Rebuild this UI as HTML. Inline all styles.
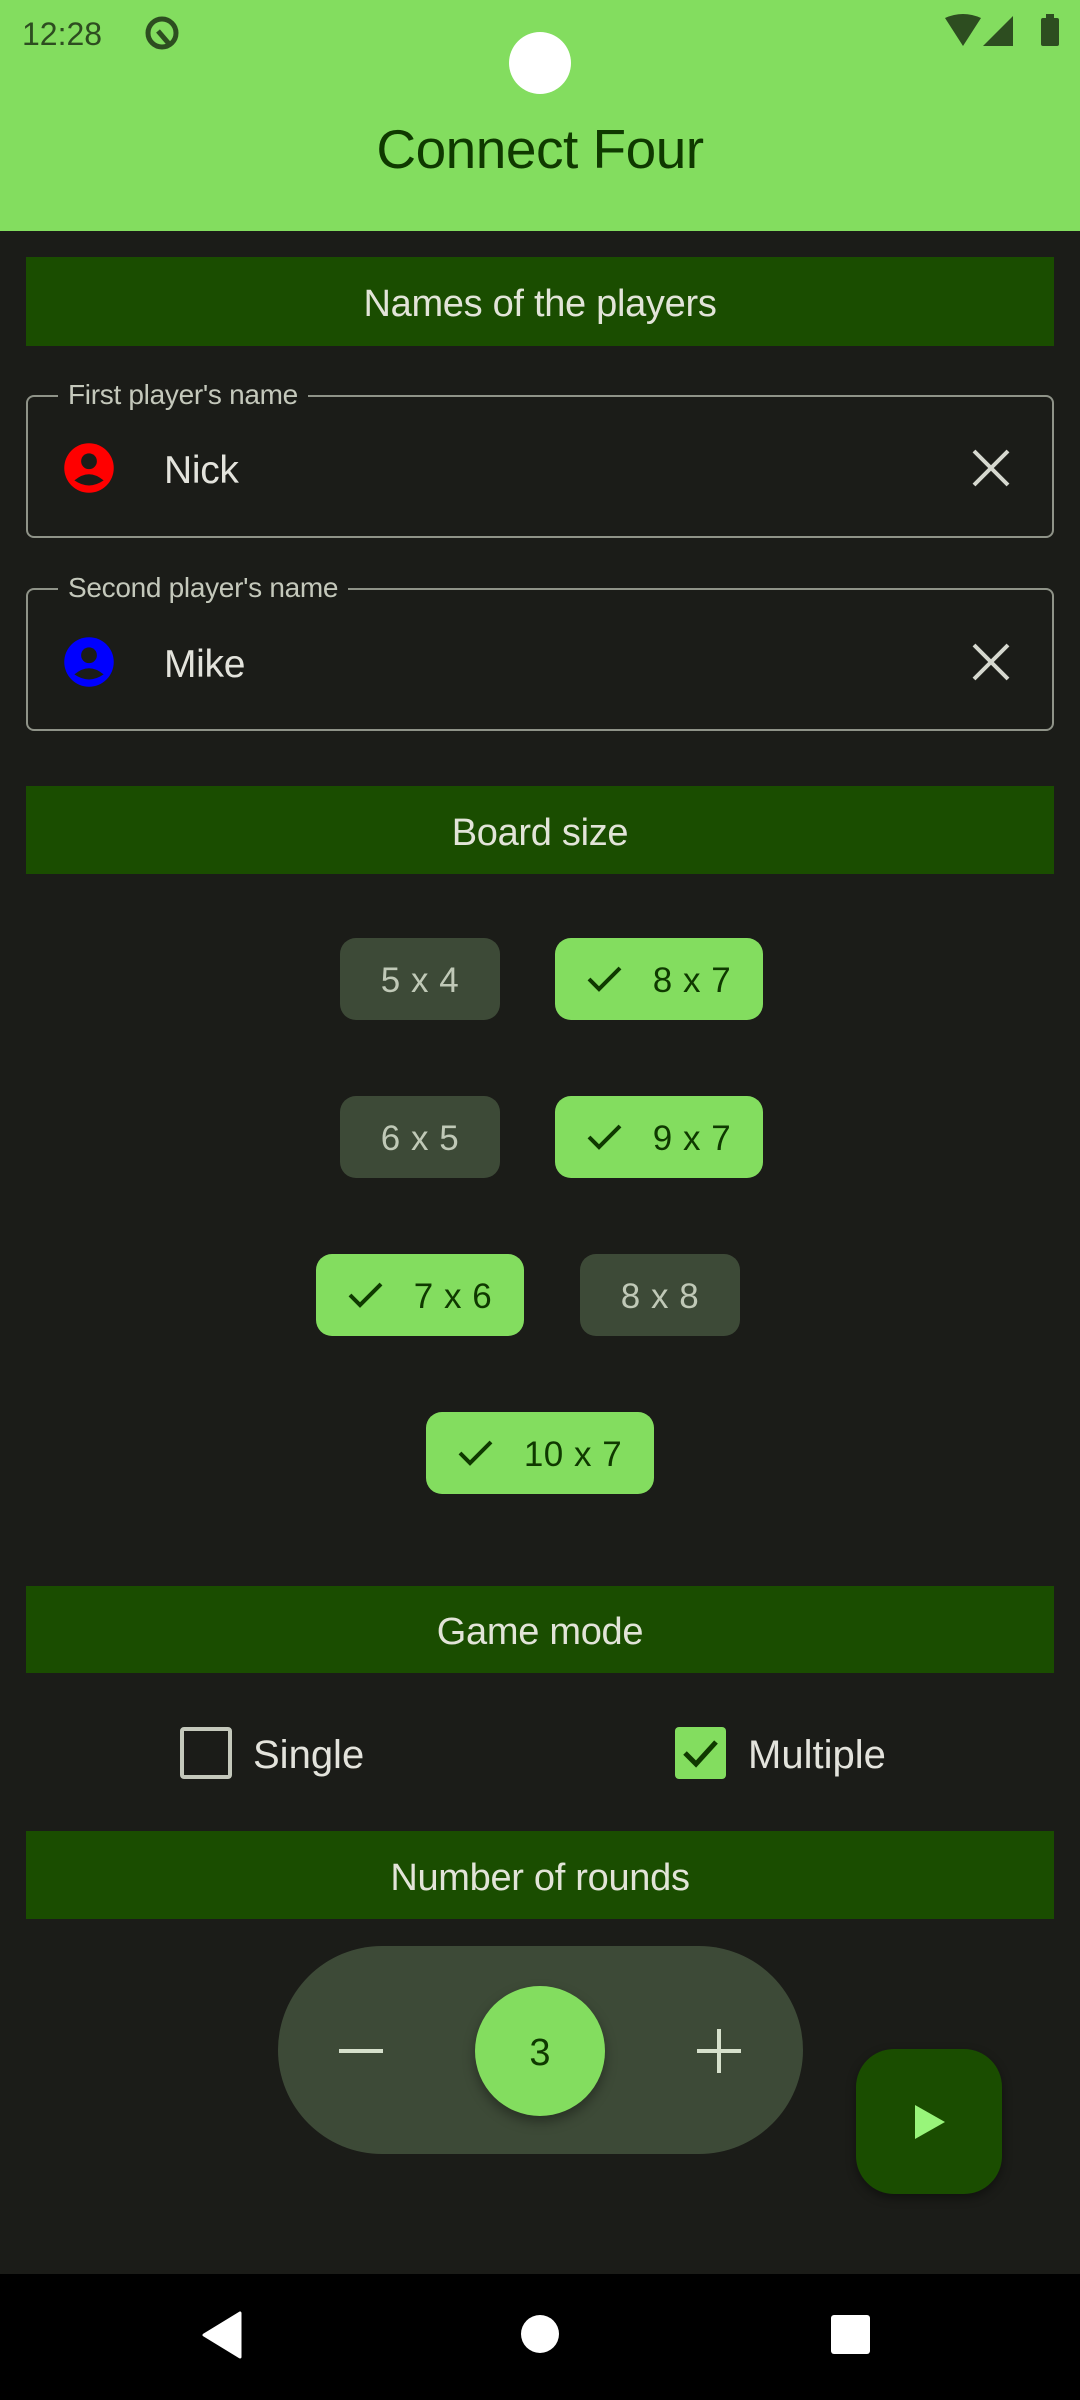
<!DOCTYPE html>
<html><head><meta charset="utf-8"><style>
*{margin:0;padding:0;box-sizing:border-box}
body{width:1080px;height:2400px;background:#1b1c18;font-family:"Liberation Sans",sans-serif;position:relative;overflow:hidden}
.a{position:absolute}
.top{left:0;top:0;width:1080px;height:231px;background:#83dd5f}
.hdr{left:26px;width:1028px;background:#1a4d00;color:#e2e4d8;font-size:38px;display:flex;align-items:center;justify-content:center;padding-top:6px;letter-spacing:-0.3px}
.fld{left:26px;width:1028px;height:143px;border:2px solid #8f9388;border-radius:8px}
.lbl{background:#1b1c18;color:#c4c8bb;font-size:28px;padding:0 10px;left:58px;letter-spacing:-0.3px}
.name{color:#e3e3dc;font-size:39px;left:164px;letter-spacing:-0.3px}
.chip{height:82px;border-radius:16px;font-size:35px;letter-spacing:0.5px;display:flex;align-items:center;justify-content:center;padding-top:4px}
.off{background:#3d4a37;color:#c0c9b7}
.on{background:#83dd5f;color:#0f3900}
.ck{width:36px;height:28px;margin-right:30px;margin-top:-4px}
</style></head><body>
<div class="a top"></div>
<div class="a" style="left:22px;top:16px;font-size:32px;color:#2d4d20">12:28</div>
<svg class="a" style="left:142px;top:13px" width="40" height="40" viewBox="0 0 40 40"><circle cx="20" cy="20" r="14" fill="none" stroke="#2d4d20" stroke-width="5"/><path d="M16 18 L28 32" stroke="#2d4d20" stroke-width="5"/></svg>
<svg class="a" style="left:945px;top:14px" width="120" height="34" viewBox="0 0 120 34"><path d="M0 4 Q18 -4 36 4 L18 32Z" fill="#2d4d20"/><path d="M68 2 L68 32 L38 32Z" fill="#2d4d20"/><rect x="96" y="4" width="18" height="28" rx="2" fill="#2d4d20"/><rect x="101" y="0" width="8" height="5" fill="#2d4d20"/></svg>
<div class="a" style="left:509px;top:32px;width:62px;height:62px;border-radius:50%;background:#fff"></div>
<div class="a" style="left:0;width:1080px;top:117px;text-align:center;font-size:55px;color:#0f3900;letter-spacing:-0.5px">Connect Four</div>

<div class="a hdr" style="top:257px;height:89px">Names of the players</div>
<div class="a fld" style="top:395px"></div>
<div class="a lbl" style="top:379px">First player's name</div>
<svg class="a" style="left:62px;top:441px" width="54" height="54" viewBox="0 0 24 24"><circle cx="12" cy="12" r="11" fill="#f00"/><circle cx="12" cy="9" r="3.5" fill="#1b1c18"/><path d="M5.5 17.5 Q12 12 18.5 17.5 Q12 22 5.5 17.5Z" fill="#1b1c18"/></svg>
<div class="a name" style="top:449px">Nick</div>
<svg class="a" style="left:972px;top:449px" width="38" height="38" viewBox="0 0 38 38"><path d="M2 2L36 36M36 2L2 36" stroke="#d6d8cf" stroke-width="4"/></svg>

<div class="a fld" style="top:588px"></div>
<div class="a lbl" style="top:572px">Second player's name</div>
<svg class="a" style="left:62px;top:635px" width="54" height="54" viewBox="0 0 24 24"><circle cx="12" cy="12" r="11" fill="#00f"/><circle cx="12" cy="9" r="3.5" fill="#1b1c18"/><path d="M5.5 17.5 Q12 12 18.5 17.5 Q12 22 5.5 17.5Z" fill="#1b1c18"/></svg>
<div class="a name" style="top:643px">Mike</div>
<svg class="a" style="left:972px;top:643px" width="38" height="38" viewBox="0 0 38 38"><path d="M2 2L36 36M36 2L2 36" stroke="#d6d8cf" stroke-width="4"/></svg>

<div class="a hdr" style="top:786px;height:88px">Board size</div>
<div class="a chip off" style="left:340px;top:938px;width:160px">5 x 4</div>
<div class="a chip on" style="left:555px;top:938px;width:208px"><svg class="ck" viewBox="0 0 36 28"><path d="M2 14L12 24L33 3" fill="none" stroke="#0f3900" stroke-width="4"/></svg>8 x 7</div>
<div class="a chip off" style="left:340px;top:1096px;width:160px">6 x 5</div>
<div class="a chip on" style="left:555px;top:1096px;width:208px"><svg class="ck" viewBox="0 0 36 28"><path d="M2 14L12 24L33 3" fill="none" stroke="#0f3900" stroke-width="4"/></svg>9 x 7</div>
<div class="a chip on" style="left:316px;top:1254px;width:208px"><svg class="ck" viewBox="0 0 36 28"><path d="M2 14L12 24L33 3" fill="none" stroke="#0f3900" stroke-width="4"/></svg>7 x 6</div>
<div class="a chip off" style="left:580px;top:1254px;width:160px">8 x 8</div>
<div class="a chip on" style="left:426px;top:1412px;width:228px"><svg class="ck" viewBox="0 0 36 28"><path d="M2 14L12 24L33 3" fill="none" stroke="#0f3900" stroke-width="4"/></svg>10 x 7</div>

<div class="a hdr" style="top:1586px;height:87px">Game mode</div>
<div class="a" style="left:180px;top:1727px;width:52px;height:52px;border:4px solid #c4c8bb;border-radius:4px"></div>
<div class="a" style="left:253px;top:1733px;font-size:40px;color:#e3e3dc">Single</div>
<div class="a" style="left:675px;top:1727px;width:51px;height:52px;background:#83dd5f;border-radius:4px"></div>
<svg class="a" style="left:675px;top:1727px" width="51" height="52" viewBox="0 0 51 52"><path d="M10 26L21 37L41 15" fill="none" stroke="#0f3900" stroke-width="5"/></svg>
<div class="a" style="left:748px;top:1733px;font-size:40px;color:#e3e3dc">Multiple</div>

<div class="a hdr" style="top:1831px;height:88px">Number of rounds</div>
<div class="a" style="left:278px;top:1946px;width:525px;height:208px;border-radius:104px;background:#3d4a37"></div>
<div class="a" style="left:339px;top:2049px;width:44px;height:4px;background:#d6e0cc"></div>
<div class="a" style="left:697px;top:2049px;width:44px;height:4px;background:#d6e0cc"></div>
<div class="a" style="left:717px;top:2029px;width:4px;height:44px;background:#d6e0cc"></div>
<div class="a" style="left:475px;top:1986px;width:130px;height:130px;border-radius:50%;background:#83dd5f;box-shadow:0 6px 12px rgba(0,0,0,.35);display:flex;align-items:center;justify-content:center;font-size:38px;color:#0f3900;padding-top:4px">3</div>
<div class="a" style="left:856px;top:2049px;width:146px;height:145px;border-radius:38px;background:#1a4d00;box-shadow:0 4px 10px rgba(0,0,0,.4)"></div>
<svg class="a" style="left:915px;top:2105px" width="32" height="34" viewBox="0 0 32 34"><path d="M0 0L30 17L0 34Z" fill="#98f57a"/></svg>

<div class="a" style="left:0;top:2274px;width:1080px;height:126px;background:#000"></div>
<svg class="a" style="left:200px;top:2311px" width="46" height="48" viewBox="0 0 46 48"><path d="M40 2L40 46L4 24Z" fill="#fff" stroke="#fff" stroke-width="3" stroke-linejoin="round"/></svg>
<div class="a" style="left:521px;top:2315px;width:38px;height:38px;border-radius:50%;background:#fff"></div>
<div class="a" style="left:831px;top:2315px;width:39px;height:39px;border-radius:3px;background:#fff"></div>
</body></html>
